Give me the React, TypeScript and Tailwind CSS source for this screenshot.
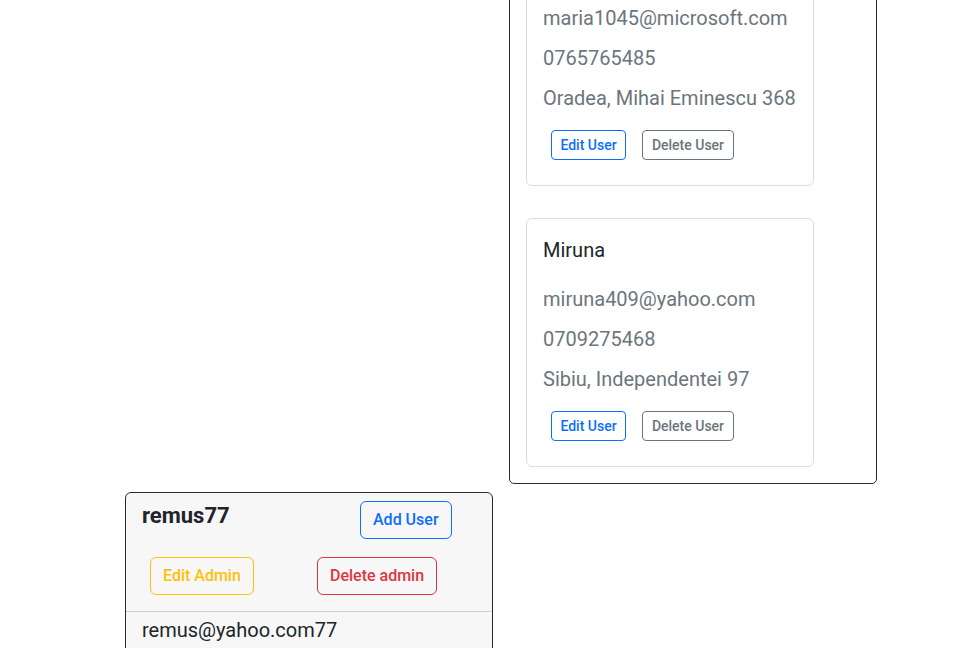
const users = [
  { name: 'Maria', email: 'maria1045@microsoft.com', phone: '0765765485', address: 'Oradea, Mihai Eminescu 368' },
  { name: 'Miruna', email: 'miruna409@yahoo.com', phone: '0709275468', address: 'Sibiu, Independentei 97' },
]

function UserCard({ user }: { user: (typeof users)[number] }) {
  return (
    <div className="w-[288px] rounded-[6px] border border-[#dcdcdc] bg-white px-4 pt-4 pb-[25px]">
      <h5 className="mb-[22px] text-[20px] leading-[30px] text-[#212529]">{user.name}</h5>
      <p className="mb-4 text-[20px] leading-[24px] text-[#6c757d]">{user.email}</p>
      <p className="mb-4 text-[20px] leading-[24px] text-[#6c757d]">{user.phone}</p>
      <p className="mb-5 text-[20px] leading-[24px] text-[#6c757d]">{user.address}</p>
      <div className="flex">
        <button className="mx-2 h-[30px] w-[75px] rounded-[4px] border border-[#0d6efd] text-[14px] font-medium text-[#0d6efd]">
          Edit User
        </button>
        <button className="mx-2 h-[30px] w-[92px] rounded-[4px] border border-[#6c757d] text-[14px] font-medium text-[#6c757d]">
          Delete User
        </button>
      </div>
    </div>
  )
}

export default function App() {
  return (
    <div className="min-h-[648px] overflow-hidden bg-white font-['Roboto',sans-serif]">
      <div className="-mt-[80px] ml-[125px] grid w-[752px] grid-cols-2 gap-x-4 gap-y-2">
        <div />
        <div className="flex flex-col gap-8 rounded-[5px] border border-[#2b2b2b] p-4">
          {users.map((u) => (
            <UserCard key={u.email} user={u} />
          ))}
        </div>

        {/* admin card */}
        <div className="rounded-[6px] border border-[#2b2b2b] bg-[#f7f7f7]">
          <div className="border-b border-[#cfcfcf] px-4 pt-2 pb-4">
            <div className="flex items-start">
              <h4 className="mt-[2px] w-[218px] text-[22px] leading-[26px] font-bold text-[#212529]">remus77</h4>
              <button className="h-[38px] rounded-[6px] border border-[#0d6efd] px-3 text-[16px] font-medium text-[#0d6efd]">
                Add User
              </button>
            </div>
            <div className="mt-[18px] grid grid-cols-2">
              <div>
                <button className="mx-2 h-[38px] rounded-[6px] border border-[#ffc107] px-3 text-[16px] font-medium text-[#ffc107]">
                  Edit Admin
                </button>
              </div>
              <div>
                <button className="mx-2 h-[38px] rounded-[6px] border border-[#dc3545] px-3 text-[16px] font-medium text-[#dc3545]">
                  Delete admin
                </button>
              </div>
            </div>
          </div>
          <div className="px-4 pt-[6px] pb-4">
            <p className="text-[20px] leading-[24px] text-[#212529]">remus@yahoo.com77</p>
          </div>
        </div>
      </div>
    </div>
  )
}
